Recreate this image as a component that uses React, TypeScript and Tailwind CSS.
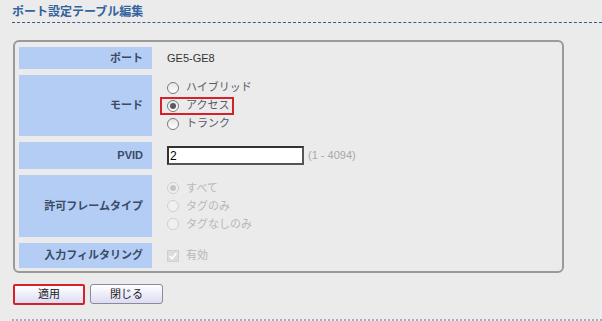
import React from 'react';

const font = { fontFamily: '"Liberation Sans", "Noto Sans CJK JP", sans-serif' };

function Radio({ checked, disabled }: { checked?: boolean; disabled?: boolean }) {
  return (
    <span
      className={`flex h-[12px] w-[12px] shrink-0 items-center justify-center rounded-full border ${
        disabled ? 'border-[#cfcfcf] bg-[#f0f0f0]' : 'border-[#7a7a7a] bg-gradient-to-b from-[#e6e6e6] to-white'
      }`}
    >
      {checked && <span className={`h-[6px] w-[6px] rounded-full ${disabled ? 'bg-[#c4c4c4]' : 'bg-[#5a5a5a]'}`} />}
    </span>
  );
}

function Option({ label, checked, disabled, boxed }: { label: string; checked?: boolean; disabled?: boolean; boxed?: boolean }) {
  return (
    <div
      className={`flex h-[18px] items-center gap-[7px] ${boxed ? '-ml-[7px] w-[74px] border-2 border-[#d8202a] pl-[5px]' : ''}`}
    >
      <Radio checked={checked} disabled={disabled} />
      <span className={disabled ? 'text-[#b8b8b8]' : 'text-[#555b66]'}>{label}</span>
    </div>
  );
}

function Row({ label, h, children }: { label: string; h: string; children: React.ReactNode }) {
  return (
    <div className={`flex ${h}`}>
      <div className="flex w-[133px] items-center justify-end bg-[#b3cdf4] pr-[9px] font-bold text-[#3b4a66]">{label}</div>
      <div className="flex flex-1 flex-col justify-center pl-[15px]">{children}</div>
    </div>
  );
}

export default function App() {
  return (
    <div className="h-[321px] w-[602px] overflow-hidden bg-[#ebebeb] text-[11px]" style={font}>
      <div className="ml-[12px] border-b border-dashed border-[#3d5a86] pt-[4px] pb-[2px]">
        <div className="text-[12px] leading-[16px] font-bold text-[#33639e]">ポート設定テーブル編集</div>
      </div>

      <div className="mt-[17px] ml-[13px] w-[551px] rounded-[6px] border-2 border-[#9a9a9a] px-[4px] pt-[5px] pb-[3px]">
        <div className="flex flex-col gap-[6px]">
          <Row label="ポート" h="h-[22px]">
            <span className="text-[11px] text-[#333]">GE5-GE8</span>
          </Row>
          <Row label="モード" h="h-[61px]">
            <Option label="ハイブリッド" />
            <Option label="アクセス" checked boxed />
            <Option label="トランク" />
          </Row>
          <Row label="PVID" h="h-[27px]">
            <div className="flex items-center">
              <input
                readOnly
                value="2"
                className="h-[19px] w-[137px] border-2 border-t-[#333] border-l-[#333] border-r-[#555] border-b-[#555] bg-white px-[1px] text-[12px] text-black outline-none"
                style={font}
              />
              <span className="ml-[4px] text-[#a8a8a8]">(1 - 4094)</span>
            </div>
          </Row>
          <Row label="許可フレームタイプ" h="h-[62px]">
            <Option label="すべて" checked disabled />
            <Option label="タグのみ" disabled />
            <Option label="タグなしのみ" disabled />
          </Row>
          <Row label="入力フィルタリング" h="h-[25px]">
            <div className="flex items-center gap-[7px]">
              <span className="flex h-[12px] w-[12px] items-center justify-center border border-[#d0d0d0] bg-[#dcdcdc]">
                <svg width="10" height="10" viewBox="0 0 10 10">
                  <path d="M1.5 5 L4 7.5 L8.5 2" fill="none" stroke="#ffffff" strokeWidth="1.6" />
                </svg>
              </span>
              <span className="text-[#b8b8b8]">有効</span>
            </div>
          </Row>
        </div>
      </div>

      <div className="mt-[11px] ml-[13px] flex gap-[5px]">
        <button className="h-[21px] w-[72px] rounded-[2px] border-2 border-[#d8202a] bg-gradient-to-b from-white to-[#dcdcf4] text-[#222]">
          適用
        </button>
        <button className="h-[20px] w-[73px] rounded-[3px] border border-[#8a8a9a] bg-gradient-to-b from-white to-[#dcdcf4] text-[#222]">
          閉じる
        </button>
      </div>

      <div className="mt-[14px] ml-[12px] border-b-2 border-dotted border-[#9fb0c8]" />
    </div>
  );
}
